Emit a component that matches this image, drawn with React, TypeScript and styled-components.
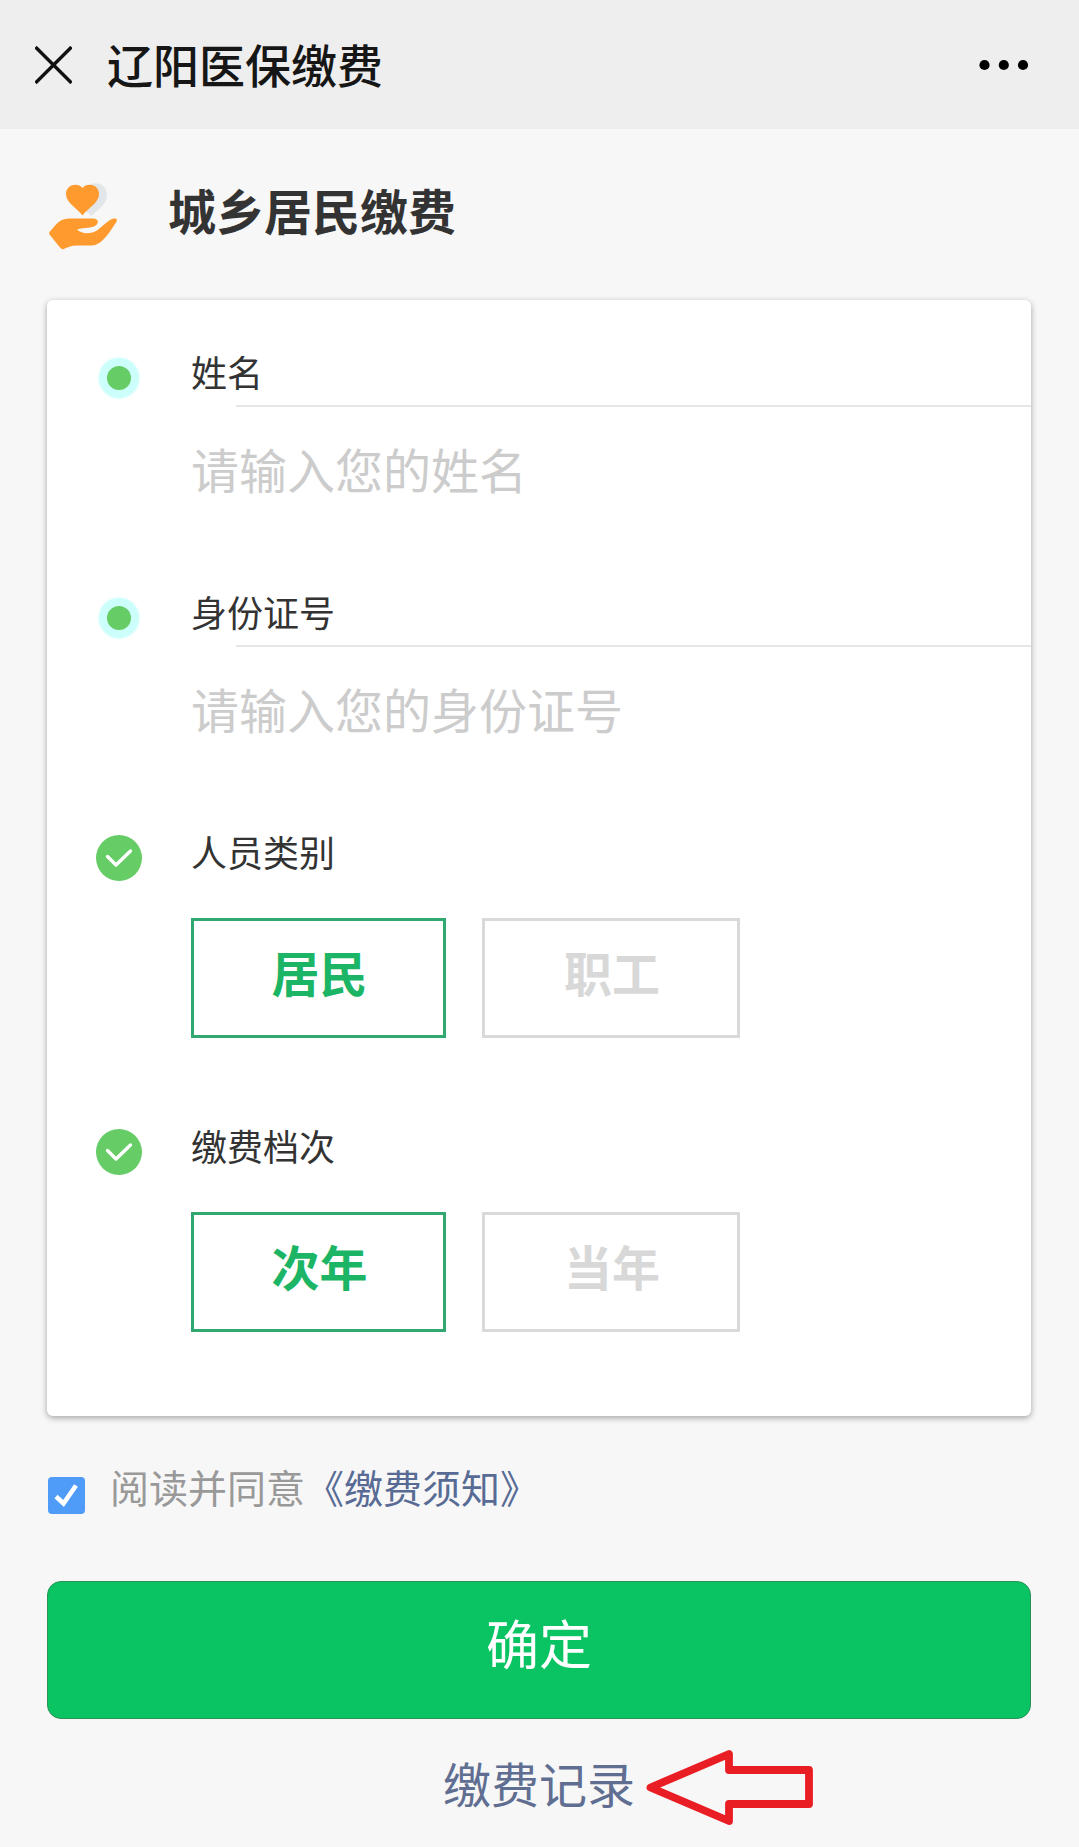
import React, { useState } from "react";
import styled, { createGlobalStyle } from "styled-components";

const GlobalStyle = createGlobalStyle`
  *, *::before, *::after { box-sizing: border-box; }
  body {
    margin: 0;
    background: #f7f7f7;
    font-family: "Noto Sans CJK SC", "Noto Sans", sans-serif;
  }
  button, input { font-family: inherit; }
`;

const Page = styled.div`
  width: 100%;
  min-height: 1847px;
  background: #f7f7f7;
  overflow: hidden;
`;

const TitleBar = styled.header`
  display: flex;
  align-items: center;
  height: 129px;
  padding: 0 50px 0 35px;
  background: #eee;
`;

const AppTitle = styled.h1`
  flex: 1;
  margin: 0 0 0 35px;
  padding-bottom: 3px;
  font-size: 46px;
  font-weight: 500;
  line-height: 70px;
  color: #161616;
`;

const IconButton = styled.button`
  display: flex;
  padding: 0;
  border: 0;
  background: none;
`;

const Main = styled.main`
  padding: 0 48px 0 47px;
`;

const Banner = styled.div`
  display: flex;
  align-items: flex-start;
  height: 171px;
  padding-top: 45px;
`;

const BannerIcon = styled.svg`
  margin-top: 8px;
`;

const BannerTitle = styled.h2`
  margin: 0 0 0 47px;
  font-size: 48px;
  font-weight: 700;
  line-height: 70px;
  color: #333;
`;

const Card = styled.section`
  padding-bottom: 48px;
  border-radius: 6px;
  background: #fff;
  box-shadow: 0 2px 6px rgba(0, 0, 0, 0.34);
`;

const Field = styled.div<{ $end: number }>`
  display: grid;
  grid-template-columns: 144px 1fr;
  padding: 42px 0 ${(p) => p.$end}px;
`;

const Marker = styled.div`
  display: flex;
  justify-content: center;
  align-items: flex-end;
  height: 66px;
  padding-bottom: 7px;
`;

const Dot = styled.span`
  width: 24px;
  height: 24px;
  margin-bottom: 11px;
  border-radius: 50%;
  background: #66cc66;
  box-shadow: 0 0 0 8px #ccfffb, 0 0 2px 9px #e6fffd;
`;

const Label = styled.div`
  height: 60px;
  font-size: 36px;
  line-height: 58px;
  color: #333;
`;

const Divider = styled.div`
  height: 2px;
  margin: 3px 0 0 45px;
  background: #e6e6e6;
`;

const TextInput = styled.input`
  display: block;
  width: 100%;
  height: 60px;
  margin-top: 31px;
  padding: 0;
  border: 0;
  outline: none;
  background: transparent;
  font-size: 48px;
  line-height: 60px;
  color: #333;
  &::placeholder { color: #ccc; opacity: 1; }
`;

const Choices = styled.div`
  display: flex;
  gap: 36px;
  margin-top: 36px;
`;

const Choice = styled.button<{ $active: boolean }>`
  width: ${(p) => (p.$active ? 255 : 258)}px;
  height: 120px;
  padding: 0 0 14px 2px;
  border: 3px solid ${(p) => (p.$active ? "#30a870" : "#d9d9d9")};
  background: #fff;
  font-size: 48px;
  font-weight: 700;
  line-height: 70px;
  color: ${(p) => (p.$active ? "#1cb566" : "#d8d8d8")};
`;

const Agreement = styled.div`
  display: flex;
  align-items: flex-start;
  height: 60px;
  margin-top: 40px;
  font-size: 39px;
  line-height: 60px;
  color: #999;
`;

const Checkbox = styled.button`
  display: flex;
  width: 37px;
  height: 37px;
  margin: 21px 25px 0 1px;
  padding: 0;
  border: 0;
  border-radius: 4px;
  background: #4f9bf8;
`;

const Notice = styled.a`
  color: #576b95;
`;

const Submit = styled.button`
  display: block;
  width: 100%;
  height: 138px;
  margin-top: 65px;
  padding: 0 0 16px;
  border: 1px solid #2a9158;
  border-radius: 14px;
  background: #0ac463;
  font-size: 53px;
  line-height: 80px;
  color: #fff;
`;

const Footer = styled.footer`
  display: flex;
  justify-content: center;
  margin-top: 33px;
`;

const RecordLink = styled.a`
  position: relative;
  font-size: 48px;
  line-height: 60px;
  color: #5f6e91;
`;

const Pointer = styled.svg`
  position: absolute;
  left: 200px;
  top: -3px;
`;

const CheckMark = () => (
  <svg width="46" height="46" viewBox="0 0 46 46" fill="none">
    <circle cx="23" cy="23" r="23" fill="#66cc66" />
    <path d="M11.5 21.5 L20 30 L34.5 16" stroke="#fff" strokeWidth="3.4" strokeLinecap="round" strokeLinejoin="round" />
  </svg>
);

function InputField({ label, placeholder }: { label: string; placeholder: string }) {
  return (
    <Field $end={42}>
      <Marker><Dot /></Marker>
      <div>
        <Label>{label}</Label>
        <Divider />
        <TextInput placeholder={placeholder} />
      </div>
    </Field>
  );
}

function ChoiceField({ label, options }: { label: string; options: string[] }) {
  const [selected, setSelected] = useState(0);
  return (
    <Field $end={36}>
      <Marker><CheckMark /></Marker>
      <div>
        <Label>{label}</Label>
        <Choices>
          {options.map((option, i) => (
            <Choice key={option} $active={i === selected} onClick={() => setSelected(i)}>
              {option}
            </Choice>
          ))}
        </Choices>
      </div>
    </Field>
  );
}

export default function App() {
  const [agreed, setAgreed] = useState(true);
  return (
    <Page>
      <GlobalStyle />
      <TitleBar>
        <IconButton aria-label="关闭">
          <svg width="37" height="38" viewBox="0 0 37 38" fill="none">
            <path d="M0.500 1 L36.500 37 M36.500 1 L0.500 37" stroke="#111" strokeWidth="3.4" />
          </svg>
        </IconButton>
        <AppTitle>辽阳医保缴费</AppTitle>
        <IconButton aria-label="更多">
          <svg width="50" height="12" viewBox="0 0 50 12">
            <circle cx="5.5" cy="6" r="5.1" />
            <circle cx="24.8" cy="6" r="5.1" />
            <circle cx="44" cy="6" r="5.1" />
          </svg>
        </IconButton>
      </TitleBar>

      <Main>
        <Banner>
          <BannerIcon width="74" height="70" viewBox="0 0 74 70">
            <path d="M43 2 C52 -1 60 4 60 13 C60 22 51 28 44 34 L36 26 Z" fill="#e2e6e8" />
            <path d="M35.500 33.500 C30 26 19 21 19 12 C19 2.500 31 0 35.500 6 C40 0 52 2.500 52 12 C52 21 41 26 35.500 33.500 Z" fill="#ff9a2e" />
            <path d="M2.500 50 L9 42.500 Q14 36.500 22 36.500 H46 C52 36.500 52.500 42 47 44.500 C42 46 35 46 30 47.500 C36 53 45 51.500 50 48.500 C55 45 61 38 66.500 36.500 C69.500 36 71 37.500 69 40.500 C64 48 59 56 53 60.500 Q49 63.500 44 63.500 H30 C24 63.500 20 65.500 16 67.300 Q14.500 67.500 13 65.500 L2.500 52.500 Q1.500 51 2.500 50 Z" fill="#ff9a2e" />
          </BannerIcon>
          <BannerTitle>城乡居民缴费</BannerTitle>
        </Banner>

        <Card>
          <InputField label="姓名" placeholder="请输入您的姓名" />
          <InputField label="身份证号" placeholder="请输入您的身份证号" />
          <ChoiceField label="人员类别" options={["居民", "职工"]} />
          <ChoiceField label="缴费档次" options={["次年", "当年"]} />
        </Card>

        <Agreement>
          <Checkbox role="checkbox" aria-checked={agreed} onClick={() => setAgreed(!agreed)}>
            {agreed && (
              <svg width="37" height="37" viewBox="0 0 37 37" fill="none">
                <path d="M8 19.500 L15.500 26.500 L28 8.500" stroke="#fff" strokeWidth="4.600" />
              </svg>
            )}
          </Checkbox>
          <span>阅读并同意</span>
          <Notice>《缴费须知》</Notice>
        </Agreement>

        <Submit>确定</Submit>

        <Footer>
          <RecordLink>
            缴费记录
            <Pointer width="172" height="78" viewBox="0 0 172 78" fill="none">
              <path d="M7.500 38.500 L86 5 V21 H166 V55 H86 V72 Z" stroke="#e91d24" strokeWidth="7.800" strokeLinejoin="round" />
            </Pointer>
          </RecordLink>
        </Footer>
      </Main>
    </Page>
  );
}
